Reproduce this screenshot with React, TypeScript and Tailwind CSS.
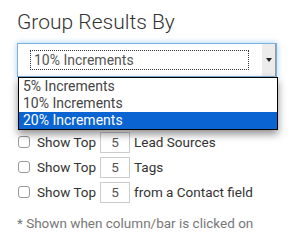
const options = ["5% Increments", "10% Increments", "20% Increments"];
const rows = ["Lead Sources", "Tags", "from a Contact field"];

export default function App() {
  return (
    <div className="w-[297px] h-[250px] bg-white pl-[17px] pr-[20px] pt-[9px] font-['Roboto',sans-serif] text-[#333]">
      <h2 className="text-[21px] leading-[26px] font-light text-[#333]">Group Results By</h2>

      {/* Select with open list */}
      <div className="relative mt-[8px]">
        <div className="flex h-[34px] w-[260px] items-center border border-[#7eb0e0] bg-white shadow-[0_0_6px_rgba(102,175,233,0.6)]">
          <div className="flex-1 pl-[12px] pr-[13px]">
            <div className="border border-dotted border-[#333] px-[3px] text-[14px] leading-[18px] text-[#555]">
              10% Increments
            </div>
          </div>
          <div className="flex h-full w-[14px] items-center justify-center border-r border-[#999] bg-[#ececec]">
            <svg width="6" height="4" viewBox="0 0 6 4">
              <path d="M0 0h6L3 4z" fill="#222" />
            </svg>
          </div>
        </div>
        <div className="absolute left-[1px] top-[34px] z-10 w-[260px] border border-black bg-white shadow-[0_4px_8px_rgba(0,0,0,0.45)]">
          {options.map((o, i) => (
            <div
              key={o}
              className={
                i === 2
                  ? "h-[17px] bg-[#0a64d2] pl-[4px] text-[14px] leading-[17px] text-white"
                  : "h-[17px] pl-[4px] text-[14px] leading-[17px] text-[#444]"
              }
            >
              {o}
            </div>
          ))}
        </div>
      </div>

      {/* Show top rows */}
      <div className="mt-[55px] flex flex-col gap-[5px]">
        {rows.map((r) => (
          <div key={r} className="flex h-[20px] items-center text-[13.5px] text-[#333]">
            <span className="ml-[1px] h-[12px] w-[12px] rounded-[3px] border border-[#999] bg-white" />
            <span className="ml-[7px]">Show Top</span>
            <span className="ml-[4px] flex h-[21px] w-[30px] items-center justify-center border border-[#ccc] text-[#555]">
              5
            </span>
            <span className="ml-[4px]">{r}</span>
          </div>
        ))}
      </div>

      <p className="mt-[13px] text-[13.5px] leading-[16px] text-[#777]">* Shown when column/bar is clicked on</p>
    </div>
  );
}
